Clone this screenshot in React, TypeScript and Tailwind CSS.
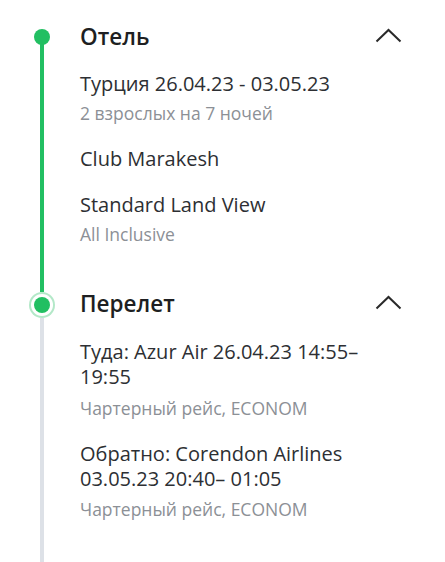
import React from "react";

const Chevron = () => (
  <svg width="27" height="15" viewBox="0 0 27 15" fill="none" className="shrink-0 mt-[5px]">
    <path d="M1.5 13.5 L13.5 2 L25.5 13.5" stroke="#2a2a2a" strokeWidth="2" />
  </svg>
);

const Main = ({ children, className = "" }: { children: React.ReactNode; className?: string }) => (
  <div className={"text-[20px] leading-[25px] text-[#2d2f33] " + className}>{children}</div>
);

const Sub = ({ children, className = "" }: { children: React.ReactNode; className?: string }) => (
  <div className={"text-[17.5px] leading-[22px] text-[#8c9096] " + className}>{children}</div>
);

const Heading = ({ children }: { children: React.ReactNode }) => (
  <div className="flex items-start justify-between h-[28px]">
    <span className="text-[22.5px] font-semibold text-[#1e1f22] leading-[28px]">{children}</span>
    <Chevron />
  </div>
);

export default function App() {
  return (
    <div
      className="w-[445px] h-[562px] bg-white overflow-hidden flex flex-col pt-[23px]"
      style={{ fontFamily: '"Open Sans", "Liberation Sans", sans-serif' }}
    >
      {/* Hotel section */}
      <div className="flex h-[267px]">
        <div className="w-[80px] shrink-0">
          <div className="w-[26px] ml-[29px] h-full flex flex-col items-center">
            <div className="w-[16px] h-[16px] rounded-full bg-[#22bf62] mt-[6px]" />
            <div className="w-[4px] flex-1 bg-[#22bf62] -mt-[2px]" />
          </div>
        </div>
        <div className="flex-1 pr-[43px]">
          <Heading>Отель</Heading>
          <Main className="mt-[20px]">Турция 26.04.23 - 03.05.23</Main>
          <Sub className="mt-[6px]">2 взрослых на 7 ночей</Sub>
          <Main className="mt-[22px]">Club Marakesh</Main>
          <Main className="mt-[21px]">Standard Land View</Main>
          <Sub className="mt-[6px]">All Inclusive</Sub>
        </div>
      </div>
      {/* Flight section */}
      <div className="flex flex-1">
        <div className="w-[80px] shrink-0">
          <div className="w-[26px] ml-[29px] h-full flex flex-col items-center">
            <div className="w-[4px] h-[2px] bg-[#22bf62]" />
            <div className="w-[26px] h-[26px] rounded-full bg-[#b3e8c8] flex items-center justify-center shrink-0">
              <div className="w-[22px] h-[22px] rounded-full bg-white flex items-center justify-center">
                <div className="w-[16px] h-[16px] rounded-full bg-[#22bf62]" />
              </div>
            </div>
            <div className="w-[4px] flex-1 bg-[#dde1e7]" />
          </div>
        </div>
        <div className="flex-1 pr-[43px]">
          <Heading>Перелет</Heading>
          <Main className="mt-[21px]">Туда: Azur Air 26.04.23 14:55– 19:55</Main>
          <Sub className="mt-[8px]">Чартерный рейс, ECONOM</Sub>
          <Main className="mt-[22px]">Обратно: Corendon Airlines 03.05.23 20:40– 01:05</Main>
          <Sub className="mt-[7px]">Чартерный рейс, ECONOM</Sub>
        </div>
      </div>
    </div>
  );
}
